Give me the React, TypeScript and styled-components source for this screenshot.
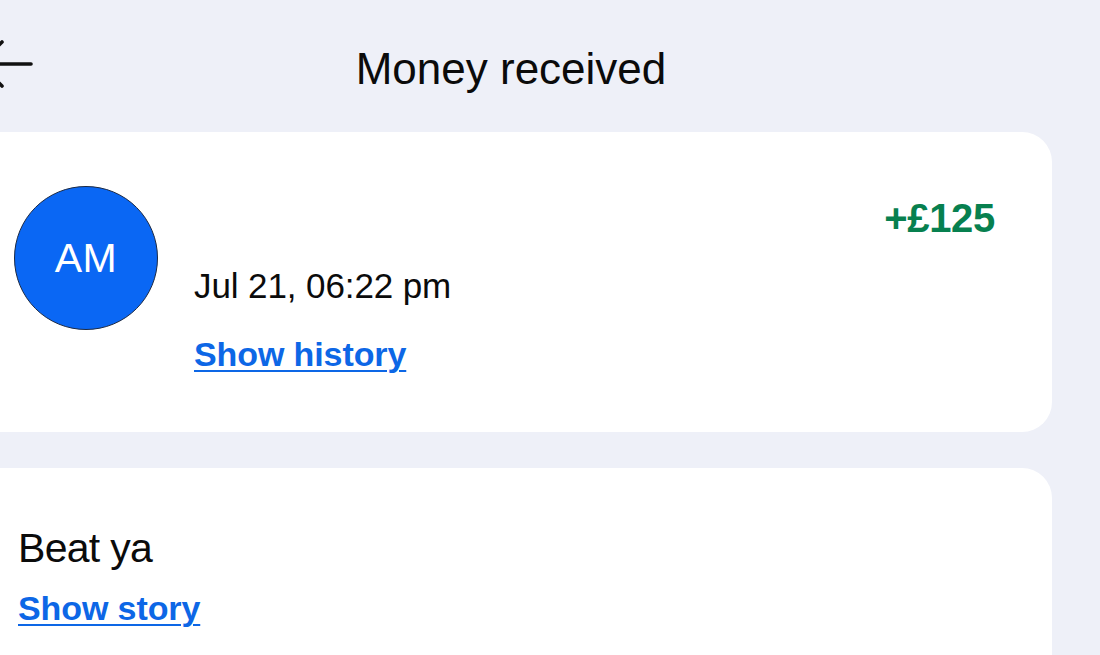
import React from "react";
import styled, { createGlobalStyle } from "styled-components";

const Global = createGlobalStyle`
  html, body { margin: 0; padding: 0; background: #eef0f8; }
  body { font-family: "Liberation Sans", Arial, sans-serif; color: #0b0b0b; overflow: hidden; }
`;

const Page = styled.div`
  margin-left: -30px;
  width: 1082px;
  display: flex;
  flex-direction: column;
`;

const Header = styled.header`
  display: grid;
  grid-template-columns: 1fr auto 1fr;
  padding-top: 44px;
  margin-bottom: 38px;
`;

const BackButton = styled.button`
  justify-self: start;
  align-self: start;
  margin: -4px 0 0 8px;
  padding: 0;
  border: 0;
  background: none;
  width: 58px;
  height: 48px;
  display: flex;
`;

const Title = styled.h1`
  margin: 0;
  font-size: 44px;
  line-height: 50px;
  font-weight: 400;
  letter-spacing: 0;
`;

const Card = styled.section<{ $height?: number }>`
  background: #ffffff;
  border-radius: 30px;
  ${(p) => (p.$height ? `height: ${p.$height}px;` : "min-height: 220px;")}
  box-sizing: border-box;
`;

const TxCard = styled(Card)`
  display: flex;
  align-items: flex-start;
  padding: 54px 57px 0 44px;
  margin-bottom: 36px;
`;

const Avatar = styled.div`
  flex: none;
  width: 144px;
  height: 144px;
  border-radius: 50%;
  background: #0a67f4;
  border: 1px solid #1c2a44;
  box-sizing: border-box;
  color: #fff;
  display: flex;
  align-items: center;
  justify-content: center;
  font-size: 41px;
  letter-spacing: 0.5px;
`;

const Info = styled.div`
  flex: 1;
  display: flex;
  flex-direction: column;
  align-items: flex-start;
  margin: 80px 0 0 36px;
`;

const DateText = styled.div`
  font-size: 35px;
  line-height: 40px;
  letter-spacing: -0.1px;
`;

const Link = styled.a<{ $gap: number }>`
  margin-top: ${(p) => p.$gap}px;
  font-size: 34px;
  line-height: 40px;
  font-weight: 700;
  color: #0d67e6;
  text-decoration: underline;
  text-decoration-thickness: 2px;
  text-underline-offset: 4px;
  letter-spacing: -0.1px;
  cursor: pointer;
`;

const Amount = styled.div`
  margin-top: 10px;
  font-size: 40px;
  line-height: 44px;
  font-weight: 700;
  color: #07804f;
  letter-spacing: -0.3px;
`;

const NoteCard = styled(Card)`
  display: flex;
  flex-direction: column;
  align-items: flex-start;
  padding: 56px 48px 40px;
`;

const Note = styled.div`
  font-size: 41px;
  line-height: 48px;
  letter-spacing: -0.7px;
`;

const ArrowIcon = () => (
  <svg width="58" height="48" viewBox="0 0 58 48" fill="none" stroke="#111" strokeWidth="3.6" strokeLinecap="round" strokeLinejoin="round">
    <path d="M2 24H53" />
    <path d="M24 2L2 24L24 46" />
  </svg>
);

export default function App() {
  return (
    <>
      <Global />
      <Page>
        <Header>
          <BackButton aria-label="Back">
            <ArrowIcon />
          </BackButton>
          <Title>Money received</Title>
          <span />
        </Header>
        <TxCard $height={300}>
          <Avatar>AM</Avatar>
          <Info>
            <DateText>Jul 21, 06:22 pm</DateText>
            <Link $gap={28}>Show history</Link>
          </Info>
          <Amount>+£125</Amount>
        </TxCard>
        <NoteCard>
          <Note>Beat ya</Note>
          <Link $gap={16}>Show story</Link>
        </NoteCard>
      </Page>
    </>
  );
}
